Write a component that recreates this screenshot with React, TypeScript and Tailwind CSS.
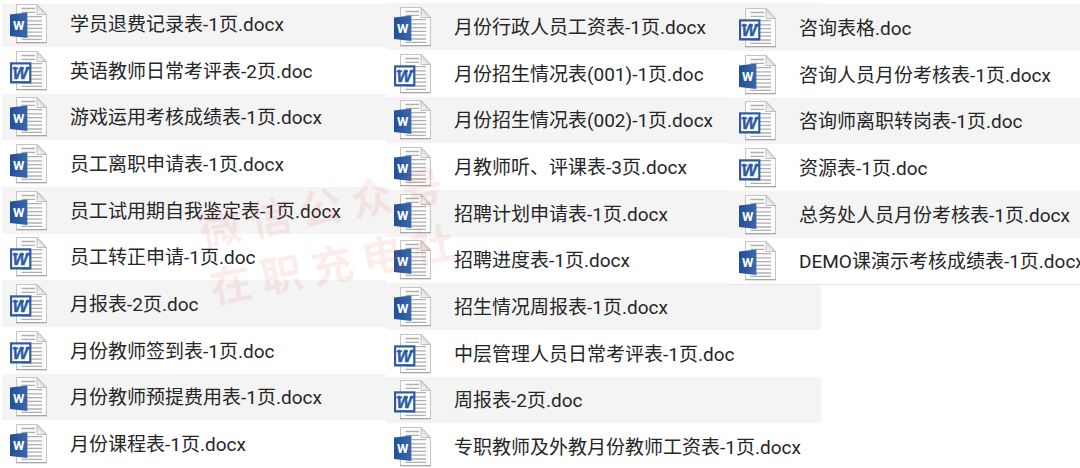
import React from 'react';

type FileKind = 'doc' | 'docx';

interface FileColumnProps {
  files: string[];
  className?: string;
}

const firstColumn = [
  '学员退费记录表-1页.docx',
  '英语教师日常考评表-2页.doc',
  '游戏运用考核成绩表-1页.docx',
  '员工离职申请表-1页.docx',
  '员工试用期自我鉴定表-1页.docx',
  '员工转正申请-1页.doc',
  '月报表-2页.doc',
  '月份教师签到表-1页.doc',
  '月份教师预提费用表-1页.docx',
  '月份课程表-1页.docx',
];

const secondColumn = [
  '月份行政人员工资表-1页.docx',
  '月份招生情况表(001)-1页.doc',
  '月份招生情况表(002)-1页.docx',
  '月教师听、评课表-3页.docx',
  '招聘计划申请表-1页.docx',
  '招聘进度表-1页.docx',
  '招生情况周报表-1页.docx',
  '中层管理人员日常考评表-1页.doc',
  '周报表-2页.doc',
  '专职教师及外教月份教师工资表-1页.docx',
];

const thirdColumn = [
  '咨询表格.doc',
  '咨询人员月份考核表-1页.docx',
  '咨询师离职转岗表-1页.doc',
  '资源表-1页.doc',
  '总务处人员月份考核表-1页.docx',
  'DEMO课演示考核成绩表-1页.docx',
];

function FileIcon({ kind }: { kind: FileKind }) {
  return (
    <svg width="38" height="40" viewBox="0 0 38 40" className="shrink-0" aria-hidden="true">
      <defs>
        <linearGradient id="word-blue" x1="0" y1="0" x2="1" y2="0">
          <stop offset="0" stopColor="#234f92" />
          <stop offset="1" stopColor="#3a68b0" />
        </linearGradient>
        <linearGradient id="page-fold" x1="0" y1="1" x2="1" y2="0">
          <stop offset="0" stopColor="#ffffff" />
          <stop offset="0.5" stopColor="#dcdcdc" />
          <stop offset="1" stopColor="#a8a8a8" />
        </linearGradient>
      </defs>
      <path d="M6.5 .5H27L36.5 10.5V38.5H6.5Z" fill="#fdfdfd" stroke="#c4c4c4" />
      <path d="M6 38.8H37" stroke="#9d9d9d" />
      <path
        d="M11.5 4.5H25M11.5 8.4H25M11.5 12.6H32M11.5 16.8H32M11.5 20.6H32M11.5 24.4H32M11.5 28.2H32M11.5 32H32M11.5 35.4H32"
        stroke="#b0b0b0"
        strokeWidth="1.3"
      />
      <path d="M27 .5V10.5H36.5Z" fill="url(#page-fold)" stroke="#b0b0b0" strokeWidth=".8" />
      {kind === 'docx' ? (
        <>
          <path d="M0 10.4L17.4 8.4V34L0 32Z" fill="url(#word-blue)" />
          <text
            x="8.6"
            y="26"
            fill="#fff"
            fontSize="13"
            fontWeight="700"
            textAnchor="middle"
            fontFamily="Roboto, sans-serif"
          >
            W
          </text>
        </>
      ) : (
        <>
          <rect x="0" y="11.3" width="21.4" height="21.2" fill="#2c5ba3" />
          <rect x="2.2" y="13.5" width="17" height="16.6" fill="#fff" />
          <path d="M2.6 17.4H8.2M10 17.4H14M15.6 17.4H20" stroke="#2c5ba3" strokeWidth="1.8" />
          <text
            x="10.4"
            y="28.4"
            fill="#2c5ba3"
            stroke="#2c5ba3"
            strokeWidth=".5"
            fontSize="16"
            fontWeight="700"
            fontStyle="italic"
            textAnchor="middle"
            fontFamily="Liberation Sans, sans-serif"
          >
            W
          </text>
        </>
      )}
    </svg>
  );
}

function FileColumn({ files, className = '' }: FileColumnProps) {
  return (
    <ul className={`self-start ${className}`}>
      {files.map((name) => (
        <li
          key={name}
          className="flex h-[47px] [&:nth-child(3n)]:h-[46px] items-center gap-[22px] pl-2 whitespace-nowrap bg-white odd:bg-[#f4f4f4]"
        >
          <FileIcon kind={name.endsWith('.docx') ? 'docx' : 'doc'} />
          <span className="pt-0.5">{name}</span>
        </li>
      ))}
    </ul>
  );
}

function Watermark() {
  return (
    <div className="pointer-events-none absolute left-[202px] top-[176px] -rotate-11 whitespace-pre text-[42px] leading-[58px] font-bold text-[#f03c3c]/9 font-['Noto_Sans_CJK_SC',sans-serif]">
      <p>微 信 公 众 号</p>
      <p>在 职 充 电 社</p>
    </div>
  );
}

export default function App() {
  return (
    <main className="relative grid max-h-screen grid-cols-[386fr_342fr_352fr] overflow-hidden bg-white text-[19px] leading-7 text-[#262626] font-['Roboto','Noto_Sans_CJK_SC',sans-serif]">
      <FileColumn files={firstColumn} className="ml-0.5 min-w-0 [&>li:first-child]:shadow-[inset_0_4px_0_#fff]" />
      <FileColumn files={secondColumn} className="-mr-[93px] mt-[3px]" />
      <FileColumn files={thirdColumn} className="z-10 mt-1 min-w-0 border-b border-[#e4e4e4] [&>li]:pl-[11px]" />
      <Watermark />
    </main>
  );
}
